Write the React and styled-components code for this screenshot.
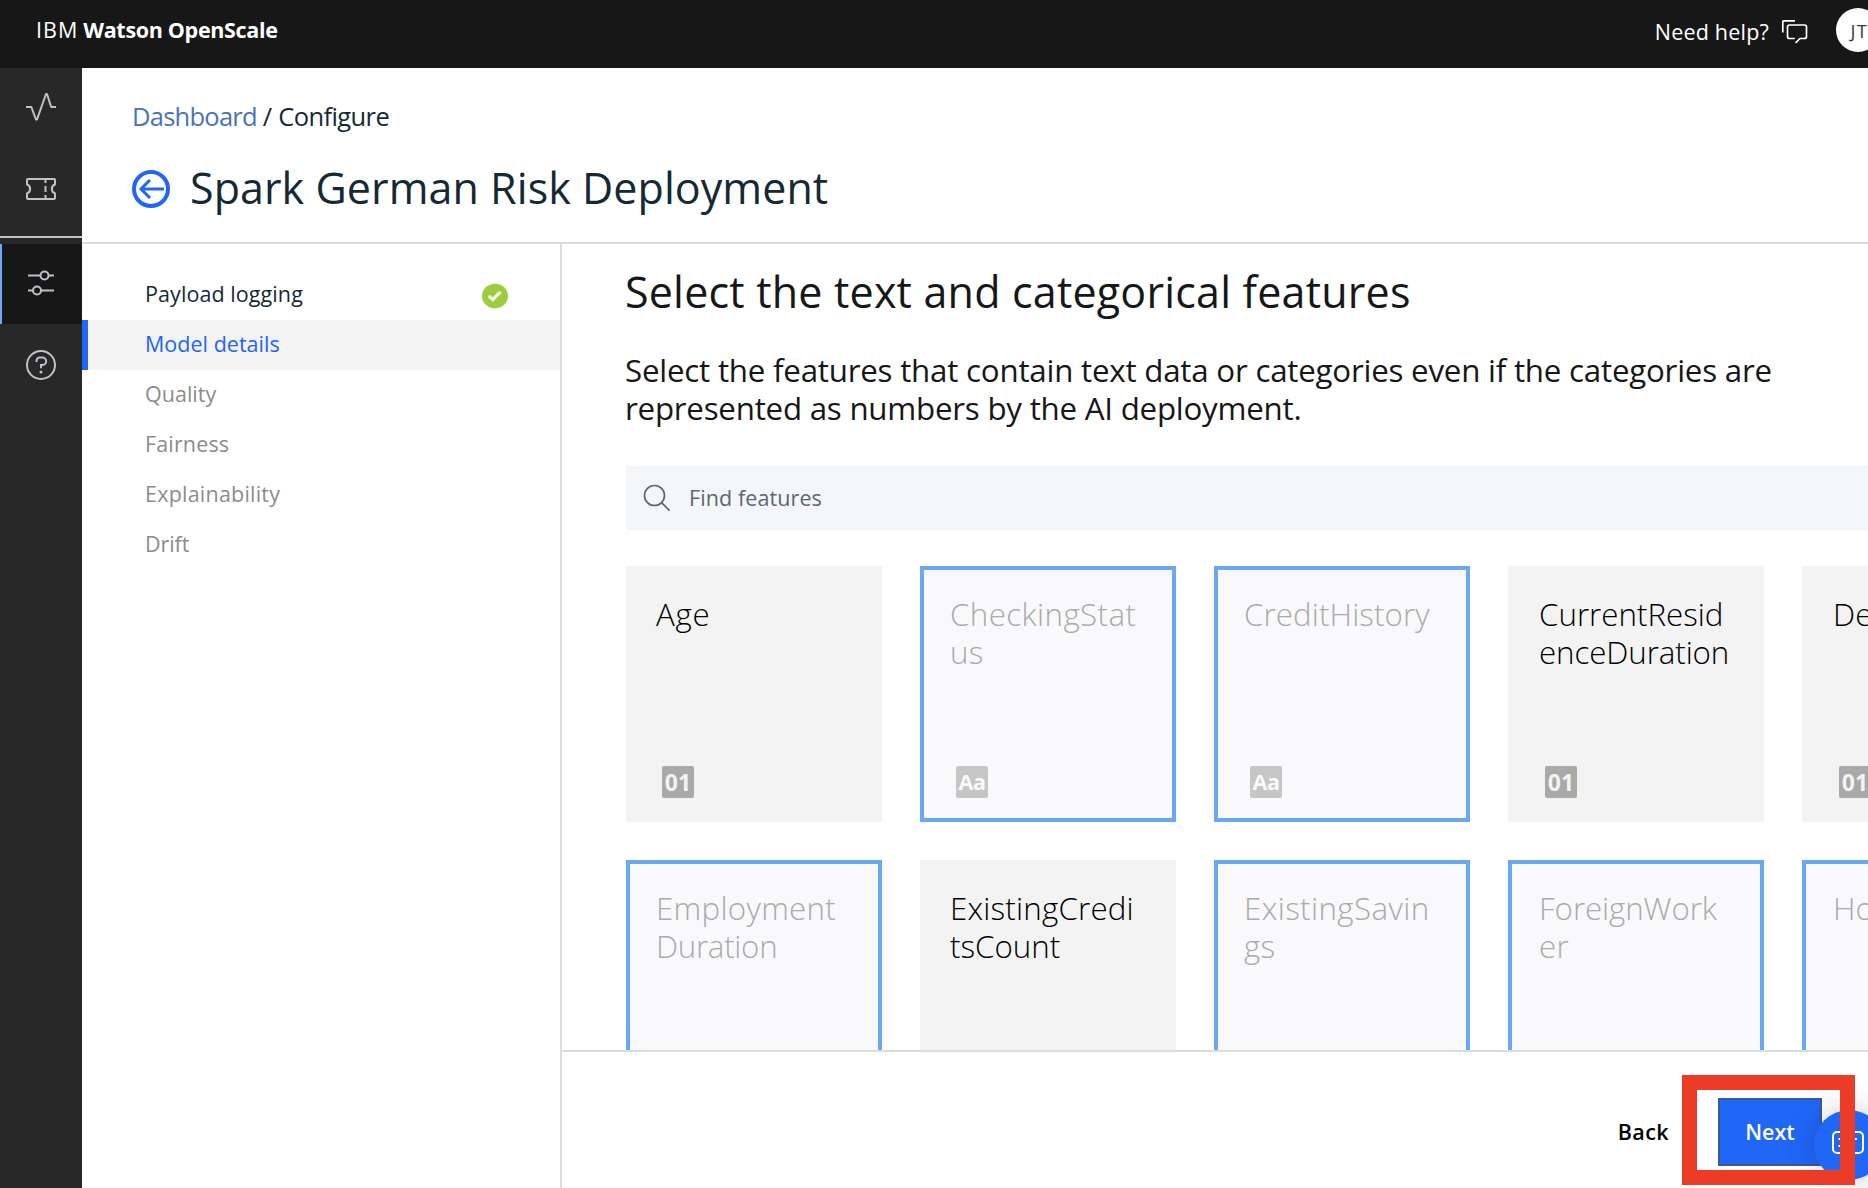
import React from 'react';
import styled, { createGlobalStyle, css } from 'styled-components';

const GlobalStyle = createGlobalStyle`
  * { box-sizing: border-box; }
  html, body, #root { height: 100%; }
  body {
    margin: 0;
    overflow: hidden;
    background: #fff;
    color: #171717;
    font-family: "Open Sans", "Noto Sans", sans-serif;
  }
`;

const Page = styled.div`
  position: relative;
  display: flex;
  flex-direction: column;
  height: 100vh;
  min-height: 1188px;
  overflow: hidden;
`;

/* ---------- Top bar ---------- */
const TopBar = styled.header`
  flex: none;
  display: flex;
  justify-content: space-between;
  height: 68px;
  padding-left: 36px;
  background: #171717;
  color: #fff;
`;
const Brand = styled.div`
  display: flex;
  gap: 5px;
  font-size: 21.5px;
  line-height: 59px;
  white-space: nowrap;
`;
const BrandPrefix = styled.span`
  letter-spacing: 1px;
`;
const BrandName = styled.span`
  font-weight: 700;
  letter-spacing: -0.32px;
`;
const TopActions = styled.div`
  display: flex;
  margin-right: -12px;
`;
const HelpLink = styled.a`
  display: flex;
  gap: 12px;
  font-size: 21.5px;
  line-height: 63px;
  letter-spacing: 0.2px;
  white-space: nowrap;
  svg { margin-top: 18px; }
`;
const Avatar = styled.div`
  flex: none;
  width: 44px;
  height: 44px;
  margin: 8px 0 0 27px;
  border-radius: 50%;
  background: #fff;
  color: #333d42;
  font-size: 18.5px;
  line-height: 46px;
  padding-left: 3px;
  text-align: center;
  letter-spacing: 1.5px;
`;

/* ---------- Left rail ---------- */
const Body = styled.div`
  flex: 1;
  display: flex;
  min-height: 0;
`;
const Rail = styled.nav`
  flex: none;
  display: flex;
  flex-direction: column;
  width: 82px;
  background: #282828;
`;
const RailItem = styled.a`
  display: flex;
  align-items: center;
  justify-content: center;
  height: 80px;
  margin-bottom: 2px;
  padding-bottom: 2px;
  color: #bec3c9;
  ${(p) => p.$active && css`
    background: #171717;
    box-shadow: inset 2px 0 0 #6ea6ff;
  `}
`;
const RailDivider = styled.hr`
  width: 100%;
  height: 2px;
  margin: 4px 0 6px;
  border: 0;
  background: #c0c4c8;
`;

/* ---------- Page header ---------- */
const Content = styled.div`
  flex: 1;
  display: flex;
  flex-direction: column;
  min-width: 0;
`;
const PageHeader = styled.div`
  flex: none;
  height: 176px;
  padding: 30px 0 0 50px;
  border-bottom: 2px solid #dcdcdc;
`;
const Breadcrumb = styled.div`
  display: flex;
  gap: 6px;
  height: 36px;
  font-size: 25.5px;
  line-height: 36px;
  color: #152935;
`;
const CrumbLink = styled.a`
  color: #4a73b5;
  letter-spacing: -0.75px;
`;
const CrumbCurrent = styled.span`
  letter-spacing: -0.6px;
`;
const TitleRow = styled.div`
  display: flex;
  align-items: center;
  gap: 20px;
  height: 60px;
  margin-top: 24px;
  svg { margin-top: 2px; }
`;
const Title = styled.h1`
  margin: 0;
  font-size: 43px;
  line-height: 60px;
  font-weight: 400;
  letter-spacing: 0.06px;
  white-space: nowrap;
  color: #152935;
`;

/* ---------- Steps ---------- */
const Columns = styled.div`
  flex: 1;
  display: flex;
  min-height: 0;
`;
const Steps = styled.div`
  flex: none;
  width: 480px;
  padding-top: 26px;
  border-right: 2px solid #dcdcdc;
`;
const Step = styled.a`
  display: flex;
  align-items: center;
  justify-content: space-between;
  height: 50px;
  padding: 0 52px 4px 63px;
  font-size: 21.5px;
  letter-spacing: ${(p) => p.$spacing}px;
  color: ${(p) => ({ done: '#152935', active: '#2066f7', idle: '#8c8c8c' })[p.$state]};
  ${(p) => p.$state === 'active' && css`
    background: #f3f3f3;
    box-shadow: inset 6px 0 0 #2066f7;
  `}
  svg { margin-top: 5px; }
`;

/* ---------- Main panel ---------- */
const Main = styled.main`
  flex: 1;
  display: flex;
  flex-direction: column;
  min-width: 0;
`;
const Scroll = styled.section`
  flex: 1;
  min-height: 0;
  padding: 18px 0 0 64px;
  overflow: hidden;
`;
const Heading = styled.h2`
  margin: 0;
  font-size: 43px;
  line-height: 60px;
  font-weight: 400;
  letter-spacing: 0.2px;
  text-indent: -1px;
  white-space: nowrap;
`;
const Intro = styled.p`
  margin: 29px 0 39px;
  font-size: 31.3px;
  line-height: 38px;
  text-indent: -1px;
  white-space: nowrap;
`;
const Line = styled.span`
  display: block;
  letter-spacing: ${(p) => p.$spacing || 0}px;
`;
const Search = styled.div`
  display: flex;
  align-items: center;
  gap: 18px;
  height: 64px;
  padding: 0 0 1px 17px;
  background: #f4f6fb;
  color: #5a6872;
  font-size: 21.5px;
  letter-spacing: 0.1px;
`;
const Cards = styled.div`
  display: grid;
  grid-template-columns: repeat(5, 256px);
  grid-auto-rows: 256px;
  gap: 38px;
  margin-top: 36px;
`;
const Card = styled.div`
  display: flex;
  flex-direction: column;
  justify-content: space-between;
  padding: 29px 0 24px 30px;
  background: ${(p) => (p.$selected ? '#f9f9fc' : '#f3f3f3')};
  color: ${(p) => (p.$selected ? '#aaaaaa' : '#000')};
  box-shadow: ${(p) => (p.$selected ? 'inset 0 0 0 4px #6aa8f4' : 'none')};
  &:nth-child(5n + 4), &:nth-child(5n) { padding-left: 31px; }
`;
const CardName = styled.div`
  font-size: 31.3px;
  line-height: 38px;
  font-weight: 355;
  white-space: nowrap;
`;
const Badge = styled.div`
  width: 32px;
  height: 32px;
  margin-left: 6px;
  border-radius: 2px;
  background: ${(p) => (p.$selected ? '#c6c6c7' : '#a9a9a8')};
  color: ${(p) => (p.$selected ? '#f9f9fc' : '#f3f3f3')};
  font-size: ${(p) => (p.$kind === 'Aa' ? 21.5 : 23)}px;
  line-height: 32px;
  font-weight: 700;
  text-align: center;
  letter-spacing: ${(p) => (p.$kind === 'Aa' ? -0.5 : 0)}px;
`;
const Footer = styled.footer`
  flex: none;
  display: flex;
  align-items: flex-start;
  justify-content: flex-end;
  gap: 49px;
  height: 138px;
  padding: 46px 46px 0 0;
  border-top: 2px solid #dcdcdc;
`;
const Button = styled.button`
  height: 68px;
  padding: 0 0 2px;
  border: 0;
  background: none;
  font: 600 21.5px "Open Sans", sans-serif;
  letter-spacing: 0.4px;
  color: #000;
  ${(p) => p.$primary && css`
    width: 104px;
    border: 2px solid #3a5a94;
    background: #2066f7;
    color: #fff;
    letter-spacing: 0;
  `}
`;

/* ---------- Overlays ---------- */
const ChatBubble = styled.div`
  position: absolute;
  left: 1814px;
  top: 1110px;
  display: flex;
  align-items: center;
  justify-content: center;
  width: 70px;
  height: 70px;
  padding: 0 2px 5px 0;
  border-radius: 50%;
  background: #2066f7;
  box-shadow: 0 0 32px rgba(0, 0, 0, 0.2);
`;
const Highlight = styled.div`
  position: absolute;
  left: 1682px;
  top: 1075px;
  width: 173px;
  height: 110px;
  border: 15px solid #ec3b26;
`;

/* ---------- Icons ---------- */
const Pulse = () => (
  <svg width="30" height="30" viewBox="0 0 30 30" fill="none" stroke="currentColor" strokeWidth="2">
    <path d="M0 15h5.300l4.700 12.500h1l9-25.500h1l4.200 13h5" strokeLinejoin="round" />
  </svg>
);
const Ticket = () => (
  <svg width="30" height="24" viewBox="0 0 30 24" fill="none" stroke="currentColor" strokeWidth="2" strokeLinejoin="round">
    <path d="M2 2h26a1 1 0 0 1 1 1v4.500a4.800 4.800 0 0 0 0 9V21a1 1 0 0 1-1 1H2a1 1 0 0 1-1-1v-4.500a4.800 4.800 0 0 0 0-9V3a1 1 0 0 1 1-1z" />
    <path d="M19.500 2v4M19.500 9v6M19.500 18v4" />
  </svg>
);
const Sliders = () => (
  <svg width="26" height="26" viewBox="0 0 26 26" fill="none" stroke="currentColor" strokeWidth="2">
    <path d="M0 5.500h12.500M20.500 5.500H26M0 20.500h5M13 20.500h13" />
    <circle cx="16.500" cy="5.500" r="4" />
    <circle cx="9" cy="20.500" r="4" />
  </svg>
);
const Question = () => (
  <svg width="30" height="30" viewBox="0 0 30 30" fill="none" stroke="currentColor" strokeWidth="2">
    <circle cx="15" cy="15" r="14" />
    <path d="M10.500 12v-1.200A3.300 3.300 0 0 1 13.800 7.500h2.700a3.400 3.400 0 0 1 0 7.400H15v3.300" />
    <circle cx="15" cy="22" r="1.500" fill="currentColor" stroke="none" />
  </svg>
);
const Speech = () => (
  <svg width="28" height="26" viewBox="0 0 28 26" fill="none" stroke="#fff" strokeWidth="1.700" strokeLinejoin="round">
    <path d="M1.800 14.500V3.800a1 1 0 0 1 1-1H14" />
    <path d="M14.500 24.800l4.500-4.300h4.500a2 2 0 0 0 2-2V9a2 2 0 0 0-2-2h-15a2 2 0 0 0-2 2v9.500a2 2 0 0 0 2 2h5.300" />
  </svg>
);
const BackArrow = () => (
  <svg width="38" height="38" viewBox="0 0 38 38" fill="none" stroke="#2066f7">
    <circle cx="19" cy="19" r="17" strokeWidth="4" />
    <path d="M32 19H9M18 10l-9 9 9 9" strokeWidth="3" />
  </svg>
);
const Check = () => (
  <svg width="26" height="26" viewBox="0 0 26 26" fill="none">
    <ellipse cx="13" cy="13" rx="13" ry="12.200" fill="#9bcd3f" />
    <path d="M6.800 12.800l4 3.800 7.700-7.800" stroke="#fff" strokeWidth="3.200" />
  </svg>
);
const Magnifier = () => (
  <svg width="28" height="28" viewBox="0 0 28 28" fill="none" stroke="#5a6872" strokeWidth="1.700">
    <circle cx="11.500" cy="11.500" r="10" />
    <path d="M18.600 18.600l8 8" />
  </svg>
);
const Message = () => (
  <svg width="32" height="23" viewBox="0 0 32 23" fill="none" stroke="#fff" strokeWidth="2">
    <rect x="1" y="1" width="30" height="21" rx="4" />
    <path d="M6.500 8h18.500M6.500 15h10" />
  </svg>
);

const steps = [
  { label: 'Payload logging', state: 'done', spacing: 0.08 },
  { label: 'Model details', state: 'active', spacing: 0.02 },
  { label: 'Quality', state: 'idle', spacing: 0.02 },
  { label: 'Fairness', state: 'idle', spacing: 0.15 },
  { label: 'Explainability', state: 'idle', spacing: 0.22 },
  { label: 'Drift', state: 'idle', spacing: -0.1 },
];

const features = [
  { kind: '01', lines: [['Age', 0.7]] },
  { kind: 'Aa', lines: [['CheckingStat', 0.4], ['us', 0.2]] },
  { kind: 'Aa', lines: [['CreditHistory', 0.1]] },
  { kind: '01', lines: [['CurrentResid', 0], ['enceDuration', -0.1]] },
  { kind: '01', lines: [['Dependents', 0.1]] },
  { kind: 'Aa', lines: [['Employment', 0.3], ['Duration', -0.3]] },
  { kind: '01', lines: [['ExistingCredi', 0.2], ['tsCount', 0]] },
  { kind: 'Aa', lines: [['ExistingSavin', 0.4], ['gs', 0.2]] },
  { kind: 'Aa', lines: [['ForeignWork', -0.1], ['er', 0.2]] },
  { kind: 'Aa', lines: [['Housing', 0.1]] },
];

function FeatureCard({ kind, lines }) {
  const selected = kind === 'Aa';
  return (
    <Card $selected={selected}>
      <CardName>
        {lines.map(([text, spacing]) => <Line key={text} $spacing={spacing}>{text}</Line>)}
      </CardName>
      <Badge $selected={selected} $kind={kind}>{kind}</Badge>
    </Card>
  );
}

export default function App() {
  return (
    <Page>
      <GlobalStyle />
      <TopBar>
        <Brand><BrandPrefix>IBM</BrandPrefix><BrandName>Watson OpenScale</BrandName></Brand>
        <TopActions>
          <HelpLink>Need help?<Speech /></HelpLink>
          <Avatar>JT</Avatar>
        </TopActions>
      </TopBar>
      <Body>
        <Rail>
          <RailItem><Pulse /></RailItem>
          <RailItem><Ticket /></RailItem>
          <RailDivider />
          <RailItem $active><Sliders /></RailItem>
          <RailItem><Question /></RailItem>
        </Rail>
        <Content>
          <PageHeader>
            <Breadcrumb>
              <CrumbLink>Dashboard</CrumbLink><span>/</span><CrumbCurrent>Configure</CrumbCurrent>
            </Breadcrumb>
            <TitleRow><BackArrow /><Title>Spark German Risk Deployment</Title></TitleRow>
          </PageHeader>
          <Columns>
            <Steps>
              {steps.map((s) => (
                <Step key={s.label} $state={s.state} $spacing={s.spacing}>
                  {s.label}{s.state === 'done' && <Check />}
                </Step>
              ))}
            </Steps>
            <Main>
              <Scroll>
                <Heading>Select the text and categorical features</Heading>
                <Intro>
                  <Line $spacing={-0.23}>Select the features that contain text data or categories even if the categories are</Line>
                  <Line $spacing={-0.24}>represented as numbers by the AI deployment.</Line>
                </Intro>
                <Search><Magnifier />Find features</Search>
                <Cards>
                  {features.map((f) => <FeatureCard key={f.lines[0][0]} {...f} />)}
                </Cards>
              </Scroll>
              <Footer>
                <Button>Back</Button>
                <Button $primary>Next</Button>
              </Footer>
            </Main>
          </Columns>
        </Content>
      </Body>
      <ChatBubble><Message /></ChatBubble>
      <Highlight />
    </Page>
  );
}
